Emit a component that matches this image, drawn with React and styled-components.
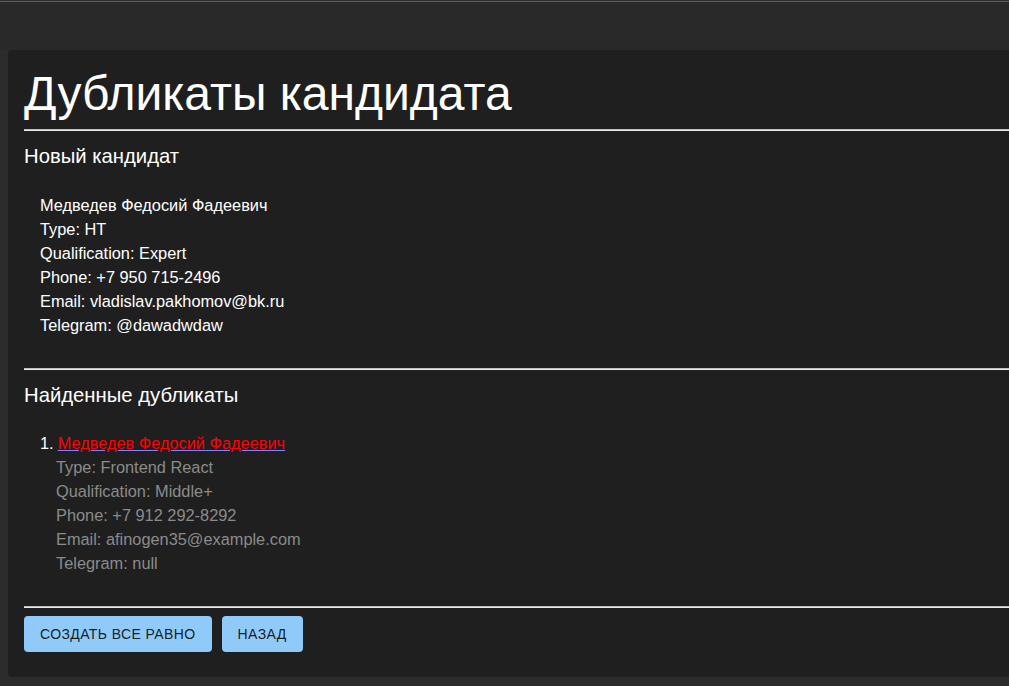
import React from "react";
import styled, { createGlobalStyle } from "styled-components";

const Global = createGlobalStyle`
  html, body { margin: 0; padding: 0; background: #2c2c2c; overflow: hidden; }
  body { font-family: "Liberation Sans", Arial, sans-serif; color: #fff; }
`;

const TopBar = styled.header`
  height: 48px;
  margin-top: 1px;
  border-top: 1px solid #5b5b5b;
  background: #292929;
`;

const Card = styled.main`
  margin-left: 8px;
  width: 1100px;
  background: #1f1f1f;
  border-radius: 4px 0 0 4px;
  padding: 16px 16px 25px 16px;
  box-sizing: border-box;
`;

const Title = styled.h1`
  margin: 0;
  font-size: 48px;
  font-weight: 400;
  line-height: normal;
`;

const Rule = styled.hr`
  margin: ${(p) => p.$m || "8px 0"};
  height: 0;
  border: none;
  border-top: 1px solid #bdbdbd;
  border-bottom: 1px solid #ececec;
`;

const SectionTitle = styled.h2`
  margin: 14px 0 0;
  font-size: 20.3px;
  font-weight: 400;
  line-height: 23px;
`;

const Info = styled.div`
  padding: 25px 16px 31px;
  font-size: 16.35px;
  line-height: 24px;
`;

const List = styled.ol`
  margin: 0;
  padding: 24px 0 31px 16px;
  list-style: none;
  font-size: 16.35px;
  line-height: 24px;
`;

const Item = styled.li`
  display: flex;
  flex-direction: column;
`;

const Num = styled.span`
  color: #fff;
`;

const NameLink = styled.a`
  color: #8383ff;
  text-decoration: underline;
  margin-left: 4px;
`;

const NameText = styled.span`
  color: #ff0000;
`;

const Detail = styled.div`
  color: #8b8b8b;
  padding-left: 16px;
`;

const Actions = styled.div`
  display: flex;
  gap: 10px;
`;

const Button = styled.button`
  font-family: "Liberation Sans", Arial, sans-serif;
  font-weight: 400;
  font-size: 14px;
  letter-spacing: 0.02857em;
  text-transform: uppercase;
  height: 36px;
  padding: 0 16px;
  border: none;
  border-radius: 4px;
  background: #90caf9;
  color: rgba(0, 0, 0, 0.87);
  cursor: pointer;
`;

const fresh = [
  "Медведев Федосий Фадеевич",
  "Type: HT",
  "Qualification: Expert",
  "Phone: +7 950 715-2496",
  "Email: vladislav.pakhomov@bk.ru",
  "Telegram: @dawadwdaw",
];

const dup = [
  "Type: Frontend React",
  "Qualification: Middle+",
  "Phone: +7 912 292-8292",
  "Email: afinogen35@example.com",
  "Telegram: null",
];

export default function App() {
  return (
    <>
      <Global />
      <TopBar />
      <Card>
        <Title>Дубликаты кандидата</Title>
        <Rule />
        <SectionTitle>Новый кандидат</SectionTitle>
        <Info>
          {fresh.map((l) => (
            <div key={l}>{l}</div>
          ))}
        </Info>
        <Rule $m="0" />
        <SectionTitle>Найденные дубликаты</SectionTitle>
        <List>
          <Item>
            <div>
              <Num>1.</Num>
              <NameLink href="#">
                <NameText>Медведев Федосий Фадеевич</NameText>
              </NameLink>
            </div>
            {dup.map((l) => (
              <Detail key={l}>{l}</Detail>
            ))}
          </Item>
        </List>
        <Rule $m="0 0 8px" />
        <Actions>
          <Button>Создать все равно</Button>
          <Button>Назад</Button>
        </Actions>
      </Card>
    </>
  );
}
